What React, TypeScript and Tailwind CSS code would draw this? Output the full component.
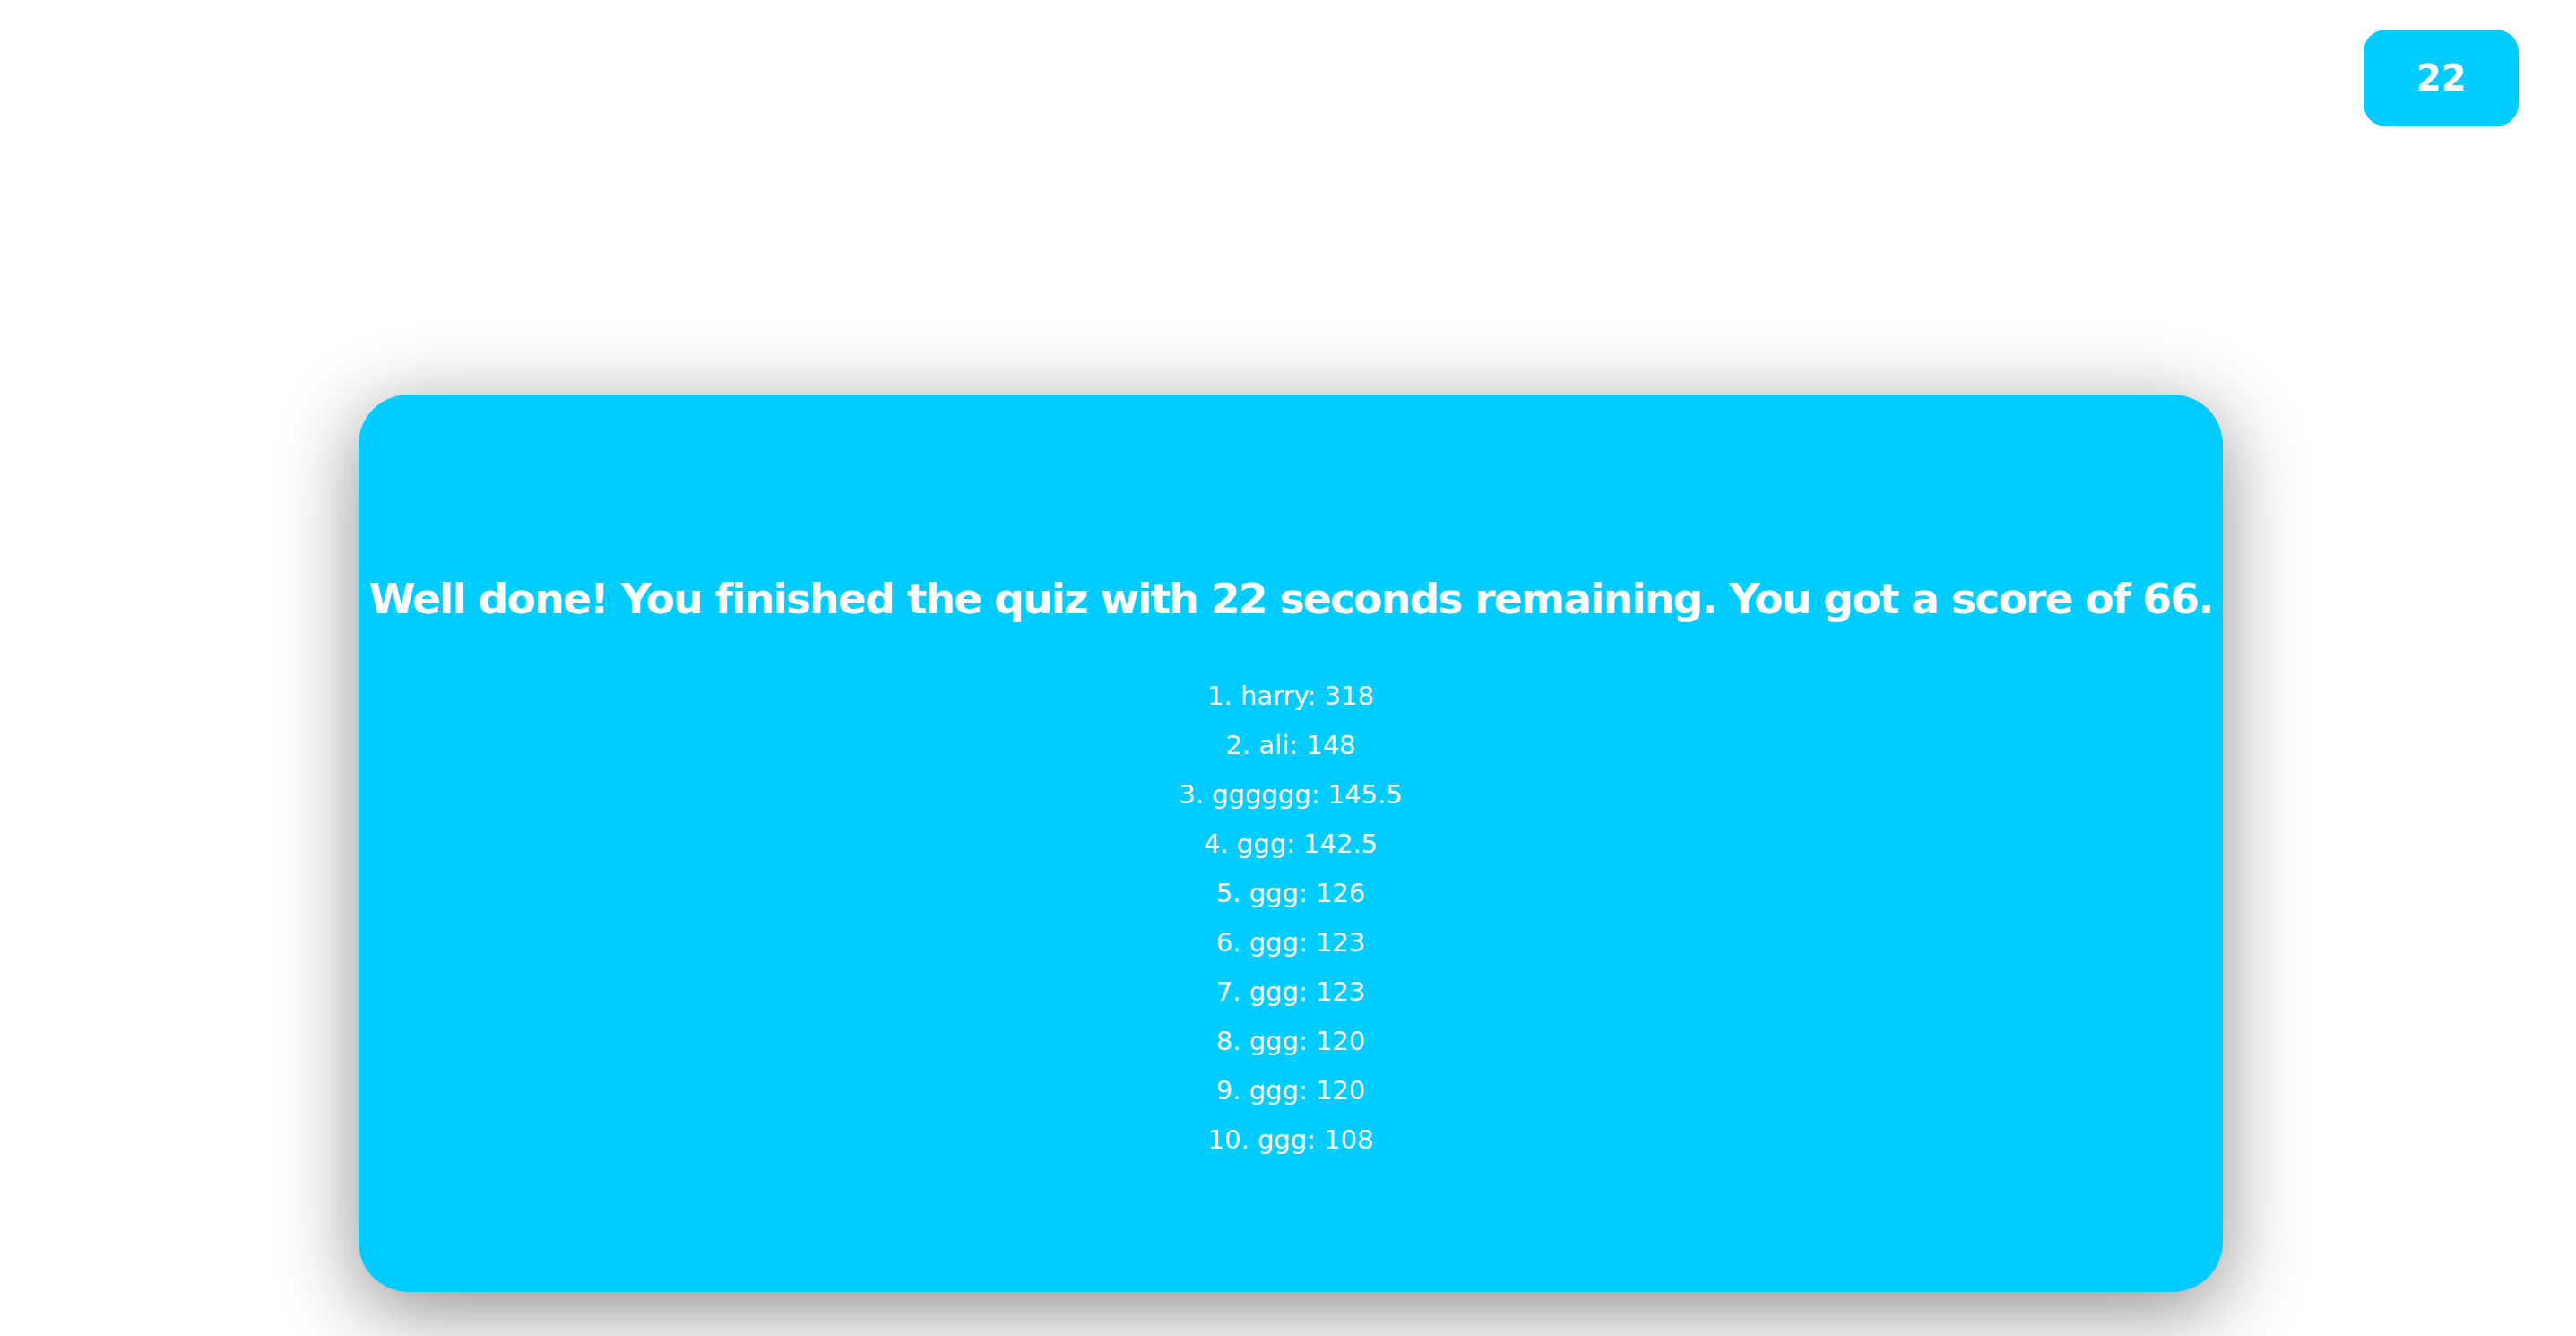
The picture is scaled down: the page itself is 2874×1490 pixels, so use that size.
const scores = [
  { name: "harry", score: 318 },
  { name: "ali", score: 148 },
  { name: "gggggg", score: 145.5 },
  { name: "ggg", score: 142.5 },
  { name: "ggg", score: 126 },
  { name: "ggg", score: 123 },
  { name: "ggg", score: 123 },
  { name: "ggg", score: 120 },
  { name: "ggg", score: 120 },
  { name: "ggg", score: 108 },
];

export default function App() {
  const timeLeft = 22;
  const finalScore = 66;

  return (
    <div className="min-h-screen bg-white font-['DejaVu_Sans',sans-serif] text-white">
      <div className="flex justify-end pt-[33px] pr-[64px]">
        <div className="flex h-[108px] w-[173px] items-center justify-center rounded-[25px] bg-[#00ccff] text-[40px] font-bold">
          {timeLeft}
        </div>
      </div>

      <div className="ml-[400px] mt-[299px] flex h-[1001px] w-[2080px] flex-col items-center rounded-[56px] bg-[#00ccff] pt-[200px] shadow-[0_20px_90px_rgba(0,0,0,0.45)]">
        <h2 className="text-[47px] leading-[56px] font-bold tracking-[-1.7px] whitespace-nowrap">
          Well done! You finished the quiz with {timeLeft} seconds remaining. You
          got a score of {finalScore}.
        </h2>
        <ol className="mt-[53px] flex flex-col items-center">
          {scores.map((s, i) => (
            <li key={i} className="text-[29px] leading-[55px]">
              {i + 1}. {s.name}: {s.score}
            </li>
          ))}
        </ol>
      </div>
    </div>
  );
}
